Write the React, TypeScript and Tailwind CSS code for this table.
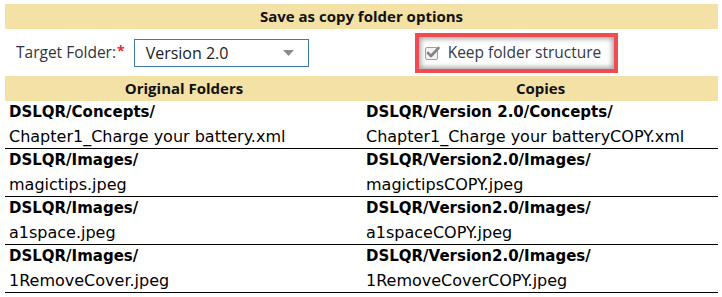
import React from 'react';

const rows = [
  ['DSLQR/Concepts/', 'Chapter1_Charge your battery.xml', 'DSLQR/Version 2.0/Concepts/', 'Chapter1_Charge your batteryCOPY.xml'],
  ['DSLQR/Images/', 'magictips.jpeg', 'DSLQR/Version2.0/Images/', 'magictipsCOPY.jpeg'],
  ['DSLQR/Images/', 'a1space.jpeg', 'DSLQR/Version2.0/Images/', 'a1spaceCOPY.jpeg'],
  ['DSLQR/Images/', '1RemoveCover.jpeg', 'DSLQR/Version2.0/Images/', '1RemoveCoverCOPY.jpeg'],
];

function CheckIcon() {
  return (
    <svg width="17" height="17" viewBox="0 0 17 17" className="shrink-0">
      <rect x="1.5" y="3.5" width="12" height="12" rx="1.5" fill="#f2f2f2" stroke="#a0a0a0" />
      <path d="M4 9 L7 12 L14.5 4" fill="none" stroke="#858585" strokeWidth="2.6" strokeLinecap="round" strokeLinejoin="round" />
    </svg>
  );
}

export default function App() {
  return (
    <div className="w-[722px] h-[297px] bg-white pt-[4px] pl-[5px] pr-[4px] font-['Open_Sans',sans-serif] text-[#111]">
      <div className="h-[25px] bg-[#f3e1a5] flex items-center justify-center text-[15px] font-bold">
        Save as copy folder options
      </div>

      <div className="h-[47px] flex items-center">
        <span className="ml-[11px] text-[15.5px] text-[#2e3440]">Target Folder:</span>
        <span className="text-[#e8282a] text-[14px] self-start mt-[11px] ml-[1px] font-bold">*</span>
        <div className="ml-[9px] w-[175px] h-[28px] border border-[#3d7ba6] flex items-center justify-between pl-[11px] pr-[14px] text-[16px] text-[#222]">
          <span>Version 2.0</span>
          <svg width="11" height="6" viewBox="0 0 11 6">
            <path d="M0 0 L11 0 L5.5 6 Z" fill="#8c8c8c" />
          </svg>
        </div>
        <div className="ml-[106px] w-[203px] h-[40px] border-[4px] border-[#ef4b51] bg-white shadow-[inset_0_0_5px_2px_#a8a8a8] flex items-center pl-[5px] gap-[7px]">
          <CheckIcon />
          <span className="text-[15.5px] text-[#343846]">Keep folder structure</span>
        </div>
      </div>

      <div className="h-[25px] bg-[#f3e1a5] grid grid-cols-[358px_1fr] text-[15px] font-bold">
        <div className="flex items-center justify-center">Original Folders</div>
        <div className="flex items-center justify-center">Copies</div>
      </div>

      <div className="font-['DejaVu_Sans',sans-serif] text-[16px] text-black">
        {rows.map((r, i) => (
          <div key={i} className="grid grid-cols-[358px_1fr] border-b border-black leading-[23.5px]">
            <div className="pl-[4px]">
              <div className="font-bold text-[15px]">{r[0]}</div>
              <div>{r[1]}</div>
            </div>
            <div className="pl-[3px]">
              <div className="font-bold text-[15px]">{r[2]}</div>
              <div>{r[3]}</div>
            </div>
          </div>
        ))}
      </div>
    </div>
  );
}
